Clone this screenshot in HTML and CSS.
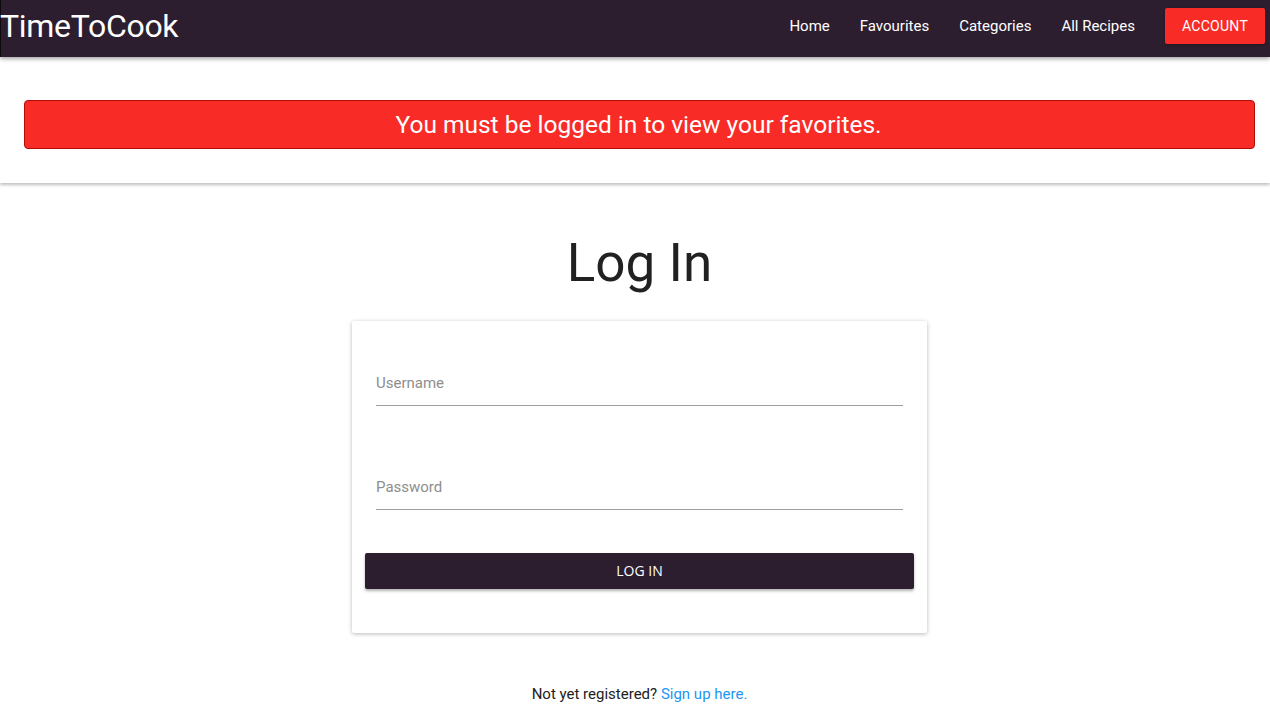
FILE: index.html
```html
<!DOCTYPE html>
<html>
<head>
<meta charset="utf-8">
<link rel="stylesheet" href="styles.css">
</head>
<body>
<header class="navbar">
  <div class="brand">TimeToCook</div>
  <nav class="nav">
    <a class="nav-link" href="#">Home</a>
    <a class="nav-link" href="#">Favourites</a>
    <a class="nav-link" href="#">Categories</a>
    <a class="nav-link" href="#">All Recipes</a>
    <a class="account-btn" href="#">ACCOUNT</a>
  </nav>
</header>
<section class="alert-section">
  <div class="alert">You must be logged in to view your favorites.</div>
</section>
<main class="main">
  <h1 class="title">Log In</h1>
  <div class="card">
    <div class="field">
      <label class="field-label">Username</label>
    </div>
    <div class="field">
      <label class="field-label">Password</label>
    </div>
    <button class="login-btn">LOG IN</button>
  </div>
  <p class="register">Not yet registered? <a class="register-link" href="#">Sign up here.</a></p>
</main>
</body>
</html>
```

FILE: styles.css
```css
* { box-sizing: border-box; }
html, body { margin: 0; padding: 0; }
body {
  font-family: Roboto, "Liberation Sans", sans-serif;
  background: #fff;
  color: #212121;
  width: 1270px;
  height: 728px;
  overflow: hidden;
}
.navbar {
  height: 57px;
  background: #2d1e2f;
  display: flex;
  align-items: center;
  justify-content: space-between;
  box-shadow: 0 2px 4px rgba(0,0,0,0.35);
  position: relative;
  z-index: 2;
  border-left: 1px solid #0d0a0e;
}
.brand {
  color: #fff;
  font-size: 32px;
  line-height: 1;
  margin-left: -1px;
  margin-top: -6px;
  letter-spacing: -0.3px;
}
.nav {
  display: flex;
  align-items: center;
  padding-right: 5px;
}
.nav-link {
  color: #fff;
  text-decoration: none;
  font-size: 15px;
  margin-right: 30px;
  margin-top: -6px;
}
.account-btn {
  display: flex;
  align-items: center;
  justify-content: center;
  width: 100px;
  height: 36px;
  background: #f92b27;
  color: #fff;
  text-decoration: none;
  font-size: 14px;
  letter-spacing: 0.3px;
  border-radius: 2px;
  margin-top: -6px;
  box-shadow: 0 1px 3px rgba(0,0,0,0.3);
}
.alert-section {
  height: 126px;
  padding: 43px 15px 0 24px;
  box-shadow: 0 2px 3px rgba(0,0,0,0.25);
  position: relative;
  z-index: 1;
}
.alert {
  height: 49px;
  background: #f92b27;
  border: 1px solid #b30d0a;
  border-radius: 4px;
  color: #fff;
  font-size: 24.5px;
  display: flex;
  align-items: center;
  justify-content: center;
  padding-bottom: 1px;
  padding-right: 2px;
}
.main {
  display: flex;
  flex-direction: column;
  align-items: center;
  padding-left: 9px;
}
.title {
  font-size: 53px;
  font-weight: 400;
  margin: 48px 0 0 0;
  line-height: 64px;
  height: 90px;
  color: #212121;
}
.card {
  width: 575px;
  height: 312px;
  box-shadow: 0 1px 4px rgba(0,0,0,0.28);
  border-radius: 2px;
  padding: 25px 13px 0 13px;
  display: flex;
  flex-direction: column;
}
.field {
  margin: 0 11px;
  height: 60px;
  border-bottom: 1px solid #9e9e9e;
  display: flex;
  align-items: flex-end;
  padding-bottom: 13px;
  margin-bottom: 44px;
}
.field-label {
  font-size: 15px;
  color: #8e8e8e;
}
.field + .field { margin-bottom: 43px; }
.login-btn {
  height: 36px;
  width: 100%;
  background: #2d1e2f;
  color: #fff;
  border: none;
  border-radius: 2px;
  font-family: "Open Sans", "Noto Sans", sans-serif;
  font-size: 14px;
  padding-bottom: 2px;
  box-shadow: 0 2px 3px rgba(0,0,0,0.3);
}
.register {
  margin: 52px 0 0 0;
  font-size: 15px;
  color: #212121;
}
.register-link {
  color: #2196f3;
  text-decoration: none;
}
```
